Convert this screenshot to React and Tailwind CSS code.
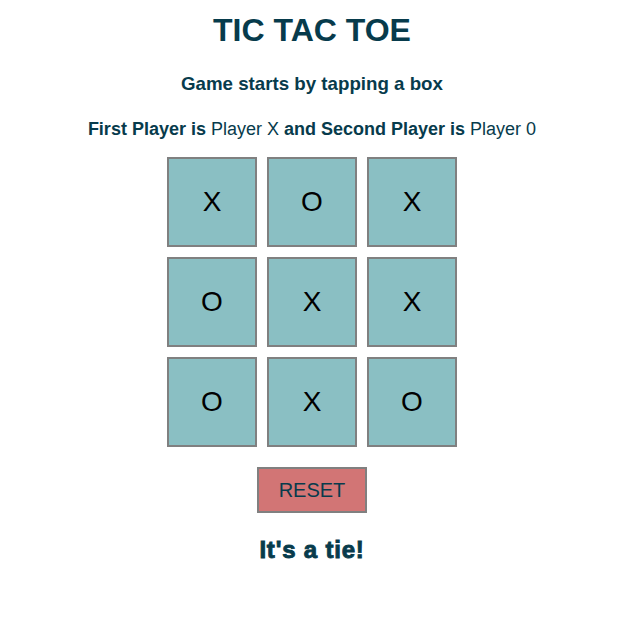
export default function App() {
  const cells = ["X", "O", "X", "O", "X", "X", "O", "X", "O"];
  return (
    <div className="w-[624px] flex flex-col items-center text-[#073b4c]" style={{ fontFamily: '"Liberation Sans", Arial, sans-serif' }}>
      <h1 className="mt-[12px] text-[32px] leading-[37px] font-bold">TIC TAC TOE</h1>
      <h3 className="mt-[24px] text-[18.72px] leading-[22px] font-bold">Game starts by tapping a box</h3>
      <p className="mt-[24px] text-[18px] leading-[21px]">
        <b>First Player is</b> Player X <b>and Second Player is</b> Player 0
      </p>
      <div className="mt-[17px] grid grid-cols-[90px_90px_90px] gap-[10px]">
        {cells.map((c, i) => (
          <div key={i} className="w-[90px] h-[90px] border-2 border-[#808080] bg-[#8abfc3] flex items-center justify-center text-[28px] text-black">
            {c}
          </div>
        ))}
      </div>
      <button className="mt-[20px] w-[110px] h-[46px] border-2 border-[#808080] bg-[#d27575] text-[20px] text-[#073b4c] flex items-center justify-center">
        RESET
      </button>
      <h2 className="mt-[23px] text-[24px] leading-[28px] font-bold tracking-[0.8px] [-webkit-text-stroke:0.9px_#073b4c]">It's a tie!</h2>
    </div>
  );
}
